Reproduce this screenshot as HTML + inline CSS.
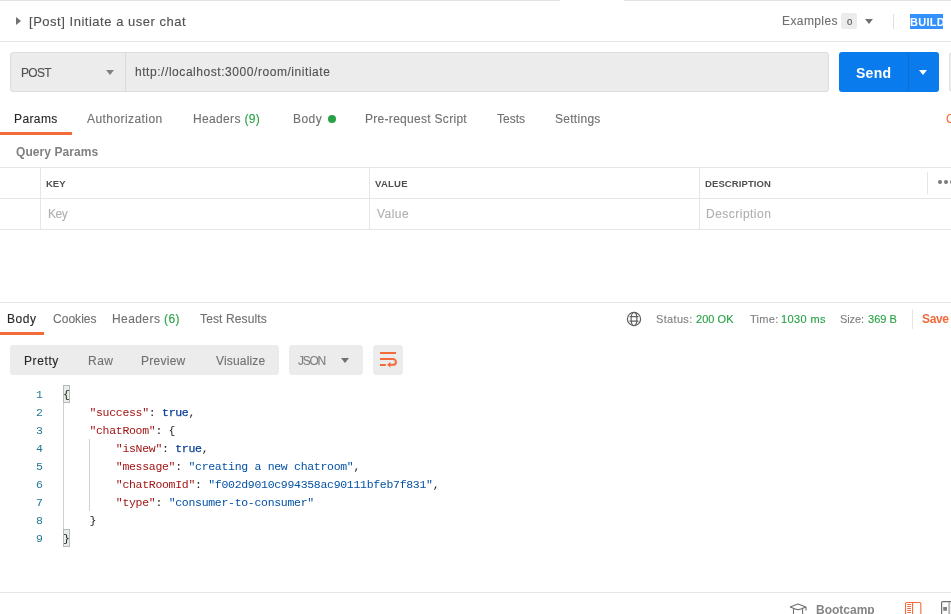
<!DOCTYPE html>
<html><head><meta charset="utf-8">
<style>
*{margin:0;padding:0;box-sizing:border-box}
html,body{width:951px;height:614px;overflow:hidden;background:#fff}
body{position:relative;font-family:"Liberation Sans",sans-serif;font-size:12px;color:#505050}
.a,.t{position:absolute;white-space:nowrap;line-height:1}
.t{line-height:1;will-change:transform;-webkit-text-stroke:0.12px currentColor}
.hl{position:absolute;height:1px;background:#e6e6e6}
.vl{position:absolute;width:1px;background:#e6e6e6}
.code{position:absolute;font-family:"Liberation Mono",monospace;font-size:11.5px;letter-spacing:-0.3px;line-height:18px;white-space:pre;will-change:transform}
.k{color:#a31515}.s{color:#0451a5}.bo{color:#0a3f9a;-webkit-text-stroke:0.25px currentColor}

</style></head><body>
<div class="hl" style="left:0;top:0;width:560px;background:#e2e2e2"></div>
<div class="hl" style="left:624px;top:0;width:327px;background:#e2e2e2"></div>
<svg class="a" style="left:16px;top:17px" width="6" height="8"><path d="M0 0 L5 4 L0 8 Z" fill="#707070"/></svg>
<div class="a" style="left:841px;top:13px;width:16px;height:16px;background:#ececec;border-radius:2px"></div>
<div class="a" style="left:846.6px;top:16.6px;font-size:9.5px;color:#5a5a5a;will-change:transform;-webkit-text-stroke:0.2px currentColor">0</div>
<svg class="a" style="left:865px;top:19px" width="8" height="5"><path d="M0 0 L8 0 L4 5 Z" fill="#707070"/></svg>
<div class="vl" style="left:893px;top:14px;height:15px;background:#e0e0e0"></div>
<div class="a" style="left:910px;top:14px;width:33px;height:15px;background:#3390ff"></div>
<div class="hl" style="left:0;top:41px;width:951px;background:#e6e6e6"></div>
<div class="a" style="left:10px;top:52px;width:819px;height:40px;background:#ececec;border:1px solid #dcdcdc;border-radius:3px"></div>
<div class="vl" style="left:125px;top:53px;height:38px;background:#d9d9d9"></div>
<svg class="a" style="left:106px;top:70px" width="8" height="5"><path d="M0 0 L8 0 L4 5 Z" fill="#808080"/></svg>
<div class="a" style="left:839px;top:52px;width:100px;height:40px;background:#097bed;border-radius:3px"></div>
<div class="vl" style="left:908px;top:52px;height:40px;background:#0a6ed4"></div>
<svg class="a" style="left:919px;top:70px" width="8" height="5"><path d="M0 0 L8 0 L4 5 Z" fill="#fff"/></svg>
<div class="a" style="left:949px;top:52px;width:10px;height:40px;border:1px solid #e2e2e2;border-radius:3px;background:#ececec"></div>
<div class="a" style="left:0;top:132px;width:72px;height:3px;background:#f26b3a"></div>
<div class="a" style="left:328px;top:115px;width:8px;height:8px;border-radius:50%;background:#27a046"></div>
<div class="hl" style="left:0;top:167px;width:951px"></div>
<div class="hl" style="left:0;top:198px;width:951px"></div>
<div class="hl" style="left:0;top:229px;width:951px"></div>
<div class="vl" style="left:40px;top:167px;height:62px"></div>
<div class="vl" style="left:369px;top:167px;height:62px"></div>
<div class="vl" style="left:699px;top:167px;height:62px"></div>
<div class="vl" style="left:927px;top:172px;height:22px"></div>
<svg class="a" style="left:937px;top:180px" width="14" height="4"><circle cx="3" cy="2" r="2" fill="#7a7a7a"/><circle cx="9" cy="2" r="2" fill="#7a7a7a"/><circle cx="15" cy="2" r="2" fill="#7a7a7a"/></svg>
<div class="hl" style="left:0;top:302px;width:951px"></div>
<div class="a" style="left:0;top:332px;width:44px;height:3px;background:#f26b3a"></div>
<svg class="a" style="left:626px;top:311px" width="16" height="16" viewBox="0 0 16 16" fill="none" stroke="#606060" stroke-width="1.2"><circle cx="8" cy="8" r="6.6"/><ellipse cx="8" cy="8" rx="2.9" ry="6.6"/><path d="M3.6 5.6 H12.4 M3.6 10.2 H12.4"/></svg>
<div class="vl" style="left:912px;top:309px;height:20px"></div>
<div class="a" style="left:10px;top:345px;width:269px;height:30px;background:#ececec;border-radius:3px"></div>
<div class="a" style="left:289px;top:345px;width:74px;height:30px;background:#ececec;border-radius:3px"></div>
<svg class="a" style="left:341px;top:358px" width="8" height="5"><path d="M0 0 L8 0 L4 5 Z" fill="#707070"/></svg>
<div class="a" style="left:373px;top:345px;width:30px;height:30px;background:#ececec;border-radius:3px"></div>
<svg class="a" style="left:373px;top:345px" width="30" height="30" viewBox="0 0 30 30" fill="none" stroke="#f26b3a" stroke-width="2"><path d="M7 8 H23 M7 14 H20 A2.9 2.9 0 0 1 20 19.8 H16.5 M7 20 H12.8"/><path d="M14 19.8 L17.4 17 V22.6 Z" fill="#f26b3a" stroke="none"/></svg>
<div class="hl" style="left:0;top:592px;width:951px"></div>
<svg class="a" style="left:789px;top:603px" width="19" height="11" viewBox="0 0 19 11" fill="none" stroke="#707070" stroke-width="1.1" stroke-linejoin="round"><path d="M1 4 L9 1 L17 4 M4.5 5.3 V11 M13.6 5.3 V11 M4.5 5.3 Q9 8 13.6 5.3 M17 4 V7.5 M1 4 L4.5 5.3 M13.6 5.3 L17 4"/></svg>
<svg class="a" style="left:905px;top:602px" width="17" height="12" viewBox="0 0 17 12" fill="none" stroke="#f26b3a" stroke-width="1.1"><rect x="0.55" y="0.55" width="15.3" height="14" rx="1.2"/><path d="M7.6 0.5 V12 M2.2 2.5 H6 M2.2 4.5 H6 M2.2 6.5 H6 M2.2 8.5 H6 M2.2 10.5 H6"/></svg>
<svg class="a" style="left:941px;top:601px" width="10" height="13" viewBox="0 0 10 13" fill="none"><rect x="0.6" y="0.6" width="14" height="15" rx="1.2" stroke="#707070" stroke-width="1.2"/><rect x="2.2" y="6" width="3.8" height="3.8" fill="#808080"/><rect x="7.2" y="1" width="2" height="12" fill="#b8b8b8"/></svg>

<div id="title" class="t" style="left:29.10px;top:15px;font-size:13px;font-weight:normal;color:#505050;letter-spacing:0.523px;">[Post] Initiate a user chat</div>
<div id="examples" class="t" style="left:781.60px;top:15px;font-size:12px;font-weight:normal;color:#707070;letter-spacing:0.400px;">Examples</div>
<div id="build" class="t" style="left:910.00px;top:17px;font-size:11px;font-weight:bold;color:#ffffff;letter-spacing:0.250px;-webkit-text-stroke:0;">BUILD</div>
<div id="post" class="t" style="left:20.50px;top:67px;font-size:12px;font-weight:normal;color:#505050;letter-spacing:-0.667px;">POST</div>
<div id="url" class="t" style="left:134.90px;top:66px;font-size:12px;font-weight:normal;color:#505050;letter-spacing:0.553px;">http://localhost:3000/room/initiate</div>
<div id="send" class="t" style="left:856.10px;top:66px;font-size:14px;font-weight:bold;color:#ffffff;letter-spacing:0.267px;-webkit-text-stroke:0;">Send</div>
<div id="t_params" class="t" style="left:14.30px;top:113px;font-size:12px;font-weight:normal;color:#282828;letter-spacing:0.400px;">Params</div>
<div id="t_auth" class="t" style="left:87.40px;top:113px;font-size:12px;font-weight:normal;color:#707070;letter-spacing:0.433px;">Authorization</div>
<div id="t_headers" class="t" style="left:193.10px;top:113px;font-size:12px;font-weight:normal;color:#707070;letter-spacing:0.340px;">Headers <span style="color:#27a046">(9)</span></div>
<div id="t_body" class="t" style="left:293.40px;top:113px;font-size:12px;font-weight:normal;color:#707070;letter-spacing:0.467px;">Body</div>
<div id="t_pre" class="t" style="left:365.10px;top:113px;font-size:12px;font-weight:normal;color:#707070;letter-spacing:0.294px;">Pre-request Script</div>
<div id="t_tests" class="t" style="left:497.00px;top:113px;font-size:12px;font-weight:normal;color:#707070;letter-spacing:0.000px;">Tests</div>
<div id="t_settings" class="t" style="left:555.10px;top:113px;font-size:12px;font-weight:normal;color:#707070;letter-spacing:0.286px;">Settings</div>
<div id="t_c" class="t" style="left:946.30px;top:113px;font-size:12px;font-weight:normal;color:#f26b3a;letter-spacing:0.000px;">C</div>
<div id="qp" class="t" style="left:16.40px;top:146px;font-size:12px;font-weight:bold;color:#808080;letter-spacing:0.073px;-webkit-text-stroke:0;">Query Params</div>
<div id="key" class="t" style="left:45.50px;top:179px;font-size:9.5px;font-weight:bold;color:#505050;letter-spacing:0.000px;-webkit-text-stroke:0;">KEY</div>
<div id="value" class="t" style="left:375.30px;top:179px;font-size:9.5px;font-weight:bold;color:#505050;letter-spacing:0.250px;-webkit-text-stroke:0;">VALUE</div>
<div id="desc" class="t" style="left:704.50px;top:179px;font-size:9.5px;font-weight:bold;color:#505050;letter-spacing:0.100px;-webkit-text-stroke:0;">DESCRIPTION</div>
<div id="pkey" class="t" style="left:47.50px;top:208px;font-size:12px;font-weight:normal;color:#b0b0b0;letter-spacing:-0.500px;">Key</div>
<div id="pvalue" class="t" style="left:377.10px;top:208px;font-size:12px;font-weight:normal;color:#b0b0b0;letter-spacing:0.450px;">Value</div>
<div id="pdesc" class="t" style="left:706.00px;top:208px;font-size:12px;font-weight:normal;color:#b0b0b0;letter-spacing:0.480px;">Description</div>
<div id="r_body" class="t" style="left:6.90px;top:313px;font-size:12px;font-weight:normal;color:#282828;letter-spacing:0.533px;">Body</div>
<div id="r_cookies" class="t" style="left:52.50px;top:313px;font-size:12px;font-weight:normal;color:#707070;letter-spacing:0.033px;">Cookies</div>
<div id="r_headers" class="t" style="left:111.60px;top:313px;font-size:12px;font-weight:normal;color:#707070;letter-spacing:0.420px;">Headers <span style="color:#27a046">(6)</span></div>
<div id="r_tests" class="t" style="left:199.50px;top:313px;font-size:12px;font-weight:normal;color:#707070;letter-spacing:0.127px;">Test Results</div>
<div id="s_status" class="t" style="left:656.00px;top:314px;font-size:11px;font-weight:normal;color:#808080;letter-spacing:0.333px;">Status:</div>
<div id="s_200" class="t" style="left:696.30px;top:314px;font-size:11px;font-weight:normal;color:#27a046;letter-spacing:0.040px;">200 OK</div>
<div id="s_time" class="t" style="left:749.70px;top:314px;font-size:11px;font-weight:normal;color:#808080;letter-spacing:0.300px;">Time:</div>
<div id="s_1030" class="t" style="left:780.80px;top:314px;font-size:11px;font-weight:normal;color:#27a046;letter-spacing:0.400px;">1030 ms</div>
<div id="s_size" class="t" style="left:839.50px;top:314px;font-size:11px;font-weight:normal;color:#808080;letter-spacing:-0.100px;">Size:</div>
<div id="s_369" class="t" style="left:867.80px;top:314px;font-size:11px;font-weight:normal;color:#27a046;letter-spacing:0.050px;">369 B</div>
<div id="s_save" class="t" style="left:922.30px;top:313px;font-size:12px;font-weight:bold;color:#f26b3a;letter-spacing:-0.333px;-webkit-text-stroke:0;">Save</div>
<div id="b_pretty" class="t" style="left:23.80px;top:355px;font-size:12px;font-weight:normal;color:#282828;letter-spacing:0.600px;">Pretty</div>
<div id="b_raw" class="t" style="left:87.50px;top:355px;font-size:12px;font-weight:normal;color:#707070;letter-spacing:0.500px;">Raw</div>
<div id="b_preview" class="t" style="left:141.00px;top:355px;font-size:12px;font-weight:normal;color:#707070;letter-spacing:0.267px;">Preview</div>
<div id="b_visualize" class="t" style="left:215.70px;top:355px;font-size:12px;font-weight:normal;color:#707070;letter-spacing:0.175px;">Visualize</div>
<div id="b_json" class="t" style="left:298.40px;top:355px;font-size:12px;font-weight:normal;color:#808080;letter-spacing:-1.267px;">JSON</div>
<div id="bootcamp" class="t" style="left:816.10px;top:604px;font-size:12px;font-weight:bold;color:#858585;letter-spacing:0.000px;-webkit-text-stroke:0;">Bootcamp</div>
<div class="a" style="left:63px;top:385px;width:7px;height:18px;background:#e8efe8;border:1px solid #b9b9b9"></div>
<div class="a" style="left:63px;top:529px;width:7px;height:18px;background:#e8efe8;border:1px solid #b9b9b9"></div>
<div class="vl" style="left:63px;top:403px;height:126px;background:#d0d0d0"></div>
<div class="vl" style="left:89px;top:439px;height:72px;background:#d0d0d0"></div>
<div class="code" style="left:36px;top:386px;color:#237893">1
2
3
4
5
6
7
8
9</div>
<div class="code" style="left:63px;top:386px;color:#222">{
    <span class="k">"success"</span>: <span class="bo">true</span>,
    <span class="k">"chatRoom"</span>: {
        <span class="k">"isNew"</span>: <span class="bo">true</span>,
        <span class="k">"message"</span>: <span class="s">"creating a new chatroom"</span>,
        <span class="k">"chatRoomId"</span>: <span class="s">"f002d9010c994358ac90111bfeb7f831"</span>,
        <span class="k">"type"</span>: <span class="s">"consumer-to-consumer"</span>
    }
}</div>
<div class="a" style="left:816px;top:604px;width:0;height:0"></div>

</body></html>
